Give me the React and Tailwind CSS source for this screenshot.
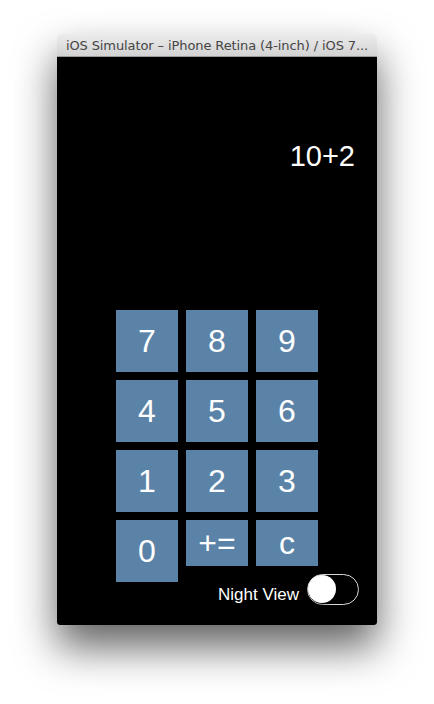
import React, { useState } from 'react';

const keys = [
  ['7', '8', '9'],
  ['4', '5', '6'],
  ['1', '2', '3'],
];

const Key = ({ label, tall = true }) => (
  <button
    className={`w-[62px] ${tall ? 'h-[62px]' : 'h-[46px]'} bg-[#5b83a8] text-white text-[32px] leading-none flex items-center justify-center`}
  >
    {label}
  </button>
);

const Toggle = ({ on, onChange }) => (
  <button
    onClick={() => onChange(!on)}
    className="relative w-[52px] h-[31px] rounded-full border-[1.5px] border-[#d9d9d9] bg-black"
  >
    <span className="absolute left-[0px] top-[0px] w-[28px] h-[28px] rounded-full bg-white shadow-[0_2px_3px_rgba(0,0,0,0.35)]" />
  </button>
);

export default function App() {
  const [night, setNight] = useState(false);

  return (
    <div className="w-[434px] h-[704px] bg-white pt-[34px] pl-[57px] font-['Liberation_Sans',Arial,sans-serif]">
      <div className="w-[320px] rounded-t-[5px] rounded-b-[3px] shadow-[0_22px_42px_rgba(0,0,0,0.62)]">
        <div className="h-[23px] rounded-t-[5px] bg-gradient-to-b from-[#ececec] to-[#d3d3d3] border-b border-[#9a9a9a] flex items-center justify-center">
          <span className="text-[13px] text-[#454545] font-['DejaVu_Sans',sans-serif] tracking-[-0.1px] leading-none">
            iOS Simulator – iPhone Retina (4-inch) / iOS 7...
          </span>
        </div>
        <div className="h-[568px] bg-black rounded-b-[3px] flex flex-col">
          <div className="pt-[85px] pr-[22px] text-right text-white text-[29px] leading-[29px]">
            10+2
          </div>
          <div className="mt-[139px] flex flex-col items-center gap-[8px]">
            {keys.map((row, i) => (
              <div key={i} className="flex gap-[8px]">
                {row.map((k) => (
                  <Key key={k} label={k} />
                ))}
              </div>
            ))}
            <div className="flex gap-[8px] items-start">
              <Key label="0" />
              <Key label="+=" tall={false} />
              <Key label="c" tall={false} />
            </div>
          </div>
          <div className="mt-[-8px] pr-[18px] flex items-center justify-end gap-[8px]">
            <span className="text-white text-[17px] leading-none mt-[9px]">Night View</span>
            <Toggle on={night} onChange={setNight} />
          </div>
        </div>
      </div>
    </div>
  );
}
